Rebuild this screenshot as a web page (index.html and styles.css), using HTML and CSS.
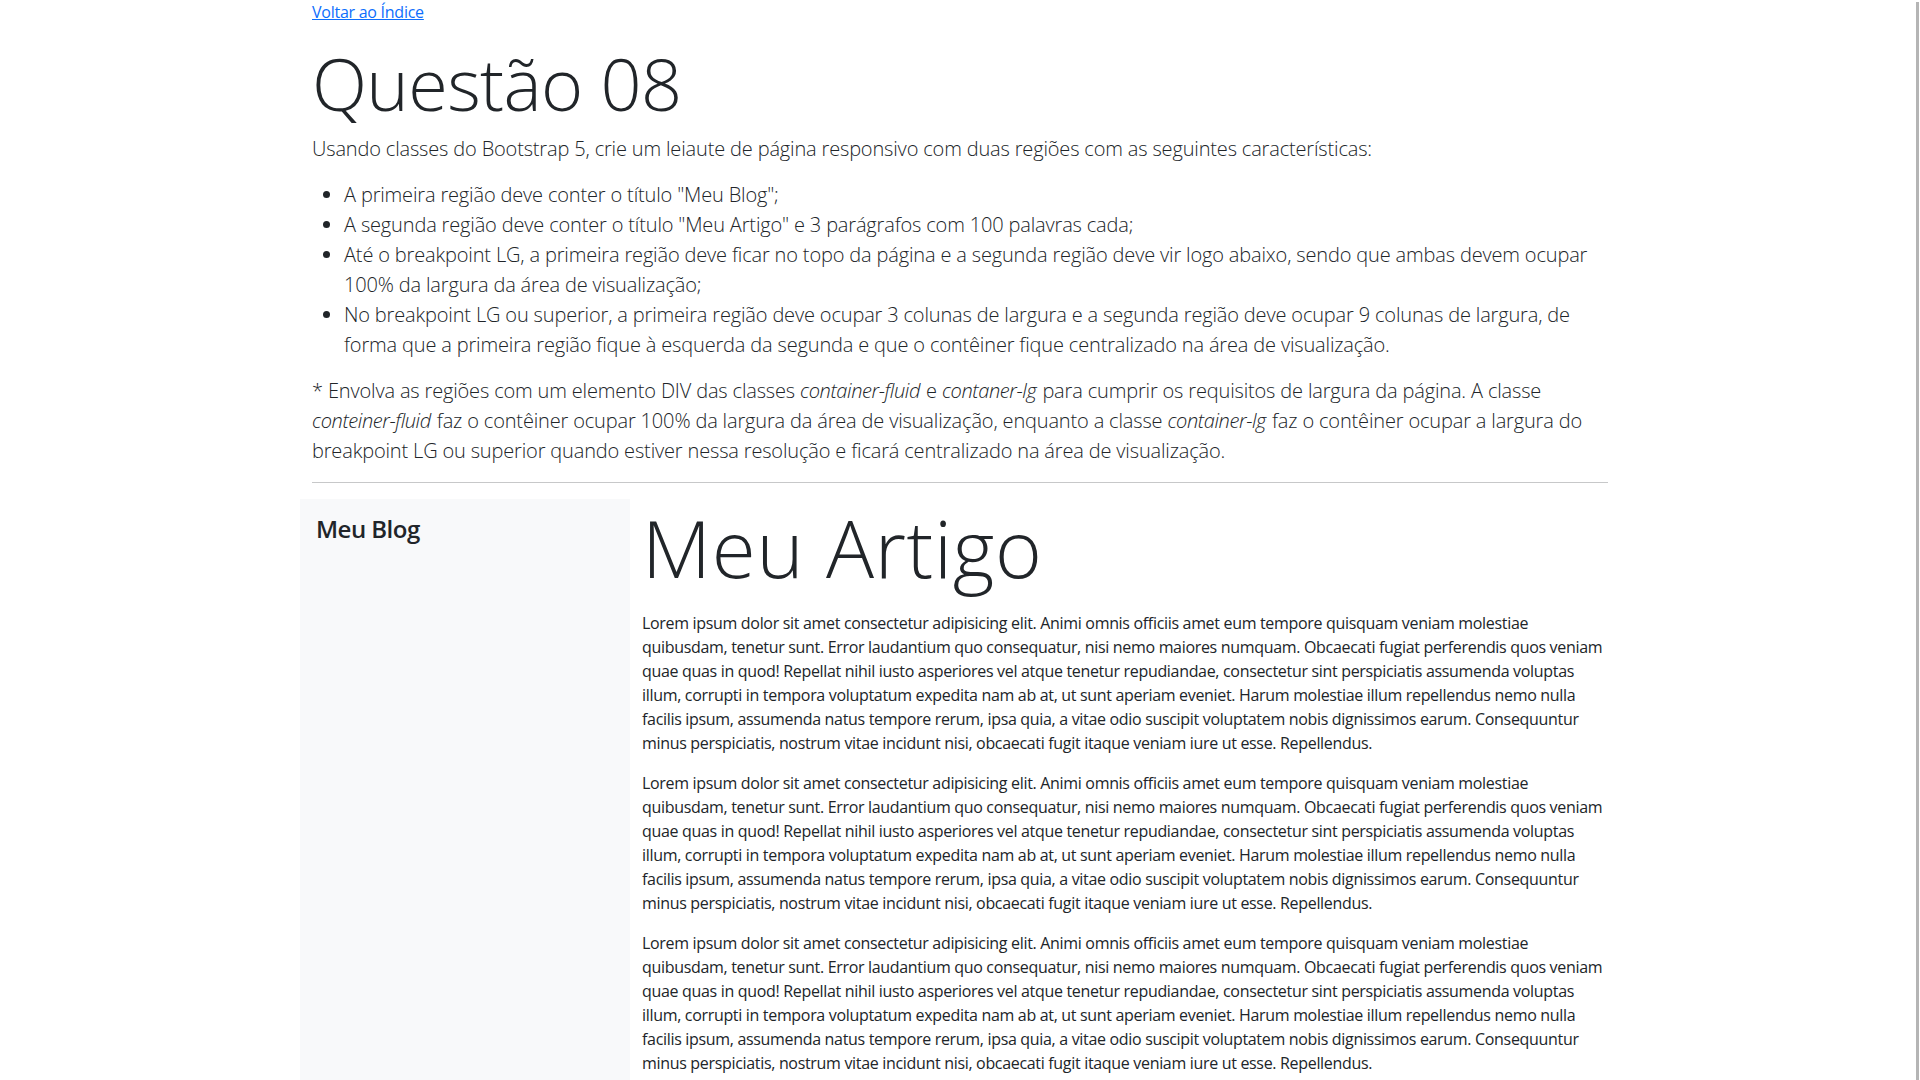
FILE: index.html
```
<!DOCTYPE html>
<html lang="pt-BR">
<head>
<meta charset="utf-8">
<title>Questão 08</title>
<link rel="stylesheet" href="styles.css">
</head>
<body>
<div class="container">
  <p class="back"><a href="#">Voltar ao Índice</a></p>
  <h1 class="title">Questão 08</h1>
  <p class="lead">Usando classes do Bootstrap 5, crie um leiaute de página responsivo com duas regiões com as seguintes características:</p>
  <ul class="lead lead-list">
    <li>A primeira região deve conter o título "Meu Blog";</li>
    <li>A segunda região deve conter o título "Meu Artigo" e 3 parágrafos com 100 palavras cada;</li>
    <li>Até o breakpoint LG, a primeira região deve ficar no topo da página e a segunda região deve vir logo abaixo, sendo que ambas devem ocupar 100% da largura da área de visualização;</li>
    <li>No breakpoint LG ou superior, a primeira região deve ocupar 3 colunas de largura e a segunda região deve ocupar 9 colunas de largura, de forma que a primeira região fique à esquerda da segunda e que o contêiner fique centralizado na área de visualização.</li>
  </ul>
  <p class="lead">* Envolva as regiões com um elemento DIV das classes <em class="term">container-fluid</em> e <em class="term">contaner-lg</em> para cumprir os requisitos de largura da página. A classe <em class="term">conteiner-fluid</em> faz o contêiner ocupar 100% da largura da área de visualização, enquanto a classe <em class="term">container-lg</em> faz o contêiner ocupar a largura do breakpoint LG ou superior quando estiver nessa resolução e ficará centralizado na área de visualização.</p>
  <hr class="divider">
  <div class="row">
    <aside class="sidebar">
      <h4 class="sidebar-title">Meu Blog</h4>
    </aside>
    <main class="article">
      <h1 class="article-title">Meu Artigo</h1>
      <p class="article-text">Lorem ipsum dolor sit amet consectetur adipisicing elit. Animi omnis officiis amet eum tempore quisquam veniam molestiae<br>quibusdam, tenetur sunt. Error laudantium quo consequatur, nisi nemo maiores numquam. Obcaecati fugiat perferendis quos veniam<br>quae quas in quod! Repellat nihil iusto asperiores vel atque tenetur repudiandae, consectetur sint perspiciatis assumenda voluptas<br>illum, corrupti in tempora voluptatum expedita nam ab at, ut sunt aperiam eveniet. Harum molestiae illum repellendus nemo nulla<br>facilis ipsum, assumenda natus tempore rerum, ipsa quia, a vitae odio suscipit voluptatem nobis dignissimos earum. Consequuntur<br>minus perspiciatis, nostrum vitae incidunt nisi, obcaecati fugit itaque veniam iure ut esse. Repellendus.</p>
      <p class="article-text">Lorem ipsum dolor sit amet consectetur adipisicing elit. Animi omnis officiis amet eum tempore quisquam veniam molestiae<br>quibusdam, tenetur sunt. Error laudantium quo consequatur, nisi nemo maiores numquam. Obcaecati fugiat perferendis quos veniam<br>quae quas in quod! Repellat nihil iusto asperiores vel atque tenetur repudiandae, consectetur sint perspiciatis assumenda voluptas<br>illum, corrupti in tempora voluptatum expedita nam ab at, ut sunt aperiam eveniet. Harum molestiae illum repellendus nemo nulla<br>facilis ipsum, assumenda natus tempore rerum, ipsa quia, a vitae odio suscipit voluptatem nobis dignissimos earum. Consequuntur<br>minus perspiciatis, nostrum vitae incidunt nisi, obcaecati fugit itaque veniam iure ut esse. Repellendus.</p>
      <p class="article-text">Lorem ipsum dolor sit amet consectetur adipisicing elit. Animi omnis officiis amet eum tempore quisquam veniam molestiae<br>quibusdam, tenetur sunt. Error laudantium quo consequatur, nisi nemo maiores numquam. Obcaecati fugiat perferendis quos veniam<br>quae quas in quod! Repellat nihil iusto asperiores vel atque tenetur repudiandae, consectetur sint perspiciatis assumenda voluptas<br>illum, corrupti in tempora voluptatum expedita nam ab at, ut sunt aperiam eveniet. Harum molestiae illum repellendus nemo nulla<br>facilis ipsum, assumenda natus tempore rerum, ipsa quia, a vitae odio suscipit voluptatem nobis dignissimos earum. Consequuntur<br>minus perspiciatis, nostrum vitae incidunt nisi, obcaecati fugit itaque veniam iure ut esse. Repellendus.</p>
    </main>
  </div>
</div>
<div class="scrollbar" aria-hidden="true"></div>
</body>
</html>
```

FILE: styles.css
```
*, *::before, *::after { box-sizing: border-box; }

body {
  margin: 0;
  font-family: "Open Sans", "Noto Sans", sans-serif;
  font-size: 16px;
  line-height: 1.5;
  color: #212529;
  background: #fff;
  letter-spacing: -0.016em;
}

.container {
  max-width: 1320px;
  margin: 0 auto;
  padding: 0 12px;
}

.back { margin: 0 0 16px; }
.back a { color: #0d6efd; text-decoration: underline; }

.title {
  font-size: 72px;
  font-weight: 300;
  line-height: 1.2;
  margin: 0 0 8px;
  letter-spacing: -0.009em;
}

.lead {
  font-size: 20px;
  font-weight: 300;
  margin: 0 0 16px;
  letter-spacing: -0.008em;
}

.term {
  letter-spacing: -0.02em;
  padding-right: 1px;
}

.lead-list { padding-left: 32px; }

.divider {
  margin: 16px 0;
  border: 0;
  border-top: 1px solid #212529;
  opacity: .25;
}

.row {
  display: flex;
  margin: 0 -12px;
}

.sidebar {
  flex: 0 0 25%;
  background: #f8f9fa;
  padding: 16px;
}

.sidebar-title {
  font-size: 24px;
  font-weight: 600;
  line-height: 1.2;
  margin: 0 0 8px;
  letter-spacing: -0.022em;
}

.article {
  flex: 0 0 75%;
  padding: 0 12px;
}

.article-title {
  font-size: 80px;
  font-weight: 300;
  line-height: 1.2;
  margin: 0 0 16px;
  letter-spacing: 0.009em;
}

.article-text {
  margin: 0 0 16px;
  white-space: nowrap;
  letter-spacing: -0.02em;
}

.scrollbar {
  position: fixed;
  top: 2px;
  bottom: 0;
  right: 1px;
  width: 3px;
  background: #b5b5b5;
}
```
